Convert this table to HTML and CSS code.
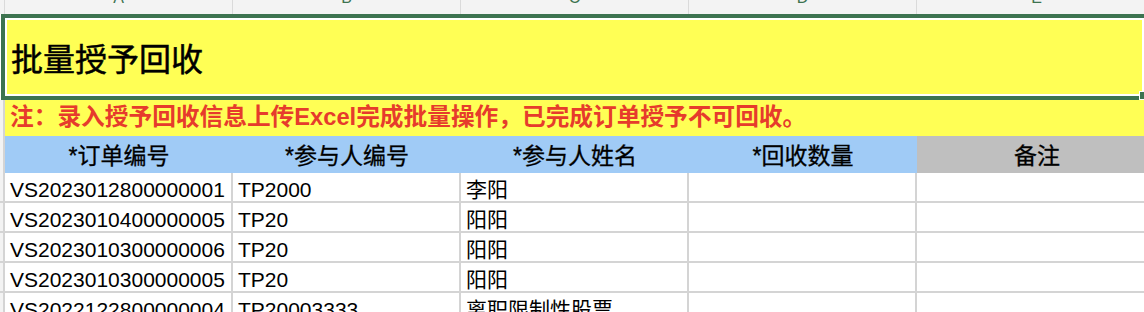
FILE: index.html
```html
<!DOCTYPE html>
<html>
    <head>
        <meta charset="utf-8">
        <title>批量授予回收</title>
        <link rel="stylesheet" href="styles.css">
    </head>
    <body>
        <div class="sheet">
            <!-- column letters -->
            <div class="col-corner"></div>
            <div class="col-head"><span>A</span></div>
            <div class="col-head"><span>B</span></div>
            <div class="col-head"><span>C</span></div>
            <div class="col-head"><span>D</span></div>
            <div class="col-head"><span>E</span></div>

            <!-- merged title, currently selected -->
            <div class="title">批量授予回收<span class="fill-handle"></span></div>

            <div class="rh"></div>
            <div class="note">注：录入授予回收信息上传Excel完成批量操作，已完成订单授予不可回收。</div>

            <div class="rh"></div>
            <div class="th">*订单编号</div>
            <div class="th">*参与人编号</div>
            <div class="th">*参与人姓名</div>
            <div class="th">*回收数量</div>
            <div class="th th-gray">备注</div>

            <div class="rh rh-data"></div>
            <div class="td">VS2023012800000001</div>
            <div class="td">TP2000</div>
            <div class="td">李阳</div>
            <div class="td"></div>
            <div class="td"></div>

            <div class="rh rh-data"></div>
            <div class="td">VS2023010400000005</div>
            <div class="td">TP20</div>
            <div class="td">阳阳</div>
            <div class="td"></div>
            <div class="td"></div>

            <div class="rh rh-data"></div>
            <div class="td">VS2023010300000006</div>
            <div class="td">TP20</div>
            <div class="td">阳阳</div>
            <div class="td"></div>
            <div class="td"></div>

            <div class="rh rh-data"></div>
            <div class="td">VS2023010300000005</div>
            <div class="td">TP20</div>
            <div class="td">阳阳</div>
            <div class="td"></div>
            <div class="td"></div>

            <div class="rh rh-data"></div>
            <div class="td">VS2022122800000004</div>
            <div class="td">TP20003333</div>
            <div class="td">离职限制性股票</div>
            <div class="td"></div>
            <div class="td"></div>
        </div>
    </body>
</html>
```

FILE: styles.css
```css
*{
    margin: 0;
    padding: 0;
    box-sizing: border-box;
}
body{
    width: 1144px;
    height: 312px;
    overflow: hidden;
    background-color: #fff;
    font-family: "Liberation Sans", "Noto Sans CJK SC", sans-serif;
    color: #111;
}
.sheet{
    display: grid;
    grid-template-columns: 5px repeat(4, 228px) 240px;
    grid-template-rows: 14px 86px 36px 37px;
    grid-auto-rows: 30px;
    width: 1157px;
}
/* column letters strip */
.col-corner,
.col-head{
    background-color: #f3f3f3;
    border-right: 1px solid #dadada;
}
.col-head{
    overflow: hidden;
    text-align: center;
    color: #3d7350;
    font-size: 16px;
}
.col-head span{
    display: block;
    line-height: 16px;
    margin-top: -10px;
}
/* merged title cell with selection frame */
.title{
    grid-column: 1 / -1;
    justify-self: start;
    width: 1147px;
    margin-left: 1px;
    position: relative;
    display: flex;
    align-items: center;
    padding-left: 6px;
    border: 4px solid #3d7350;
    box-shadow: inset 0 0 0 2px #fff;
    background-color: #ffff55;
    font-family: "Noto Sans CJK SC", sans-serif;
    font-size: 32px;
    font-weight: normal;
    -webkit-text-stroke: 0.5px #000;
    color: #000;
}
.fill-handle{
    position: absolute;
    right: -4px;
    bottom: -4px;
    width: 9px;
    height: 9px;
    background-color: #3d7350;
    border: 1px solid #fff;
}
/* row header strip */
.rh{
    background-color: #f3f3f3;
    border-right: 2px solid #d4d4d4;
}
.rh-data{
    border-bottom: 2px solid #d4d4d4;
}
.note{
    grid-column: 2 / -1;
    display: flex;
    align-items: center;
    padding: 0 0 7px 5px;
    background-color: #ffff55;
    color: #e63b2c;
    font-size: 23.7px;
    font-weight: bold;
    white-space: nowrap;
}
.th{
    display: flex;
    align-items: center;
    justify-content: center;
    padding-bottom: 2px;
    background-color: #a0cbf6;
    font-size: 23px;
    -webkit-text-stroke: 0.3px #000;
    color: #000;
    white-space: nowrap;
}
.th-gray{
    background-color: #bfbfbf;
}
.td{
    padding: 6px 5px 0;
    line-height: 22px;
    font-size: 21px;
    white-space: nowrap;
    overflow: hidden;
    border-right: 2px solid #d4d4d4;
    border-bottom: 2px solid #d4d4d4;
    color: #000;
}
```
